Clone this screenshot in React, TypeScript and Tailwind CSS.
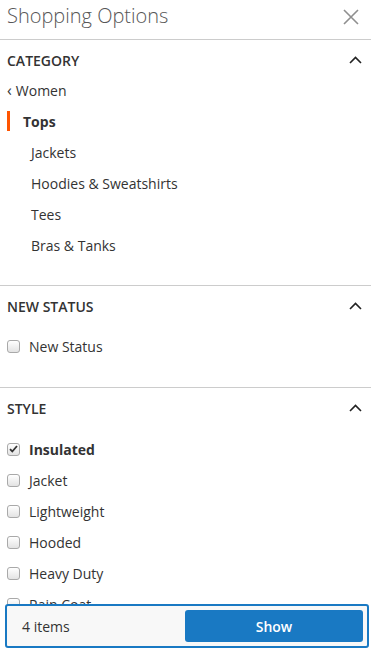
import React from 'react';

const FONT = { fontFamily: '"Open Sans", "Liberation Sans", sans-serif' };

const SUBCATS = ['Jackets', 'Hoodies & Sweatshirts', 'Tees', 'Bras & Tanks'];

const STYLES = [
  { label: 'Insulated', checked: true },
  { label: 'Jacket' },
  { label: 'Lightweight' },
  { label: 'Hooded' },
  { label: 'Heavy Duty' },
  { label: 'Rain Coat' },
];

function ChevronUp() {
  return (
    <svg width="13" height="8" viewBox="0 0 13 8" fill="none" stroke="#222" strokeWidth={1.6}>
      <path d="M1 7l5.5-5.5L12 7" />
    </svg>
  );
}

function Checkbox({ checked }: { checked?: boolean }) {
  return (
    <span className="w-[13px] h-[13px] rounded-[3px] border border-[#a9a9a9] bg-gradient-to-b from-white to-[#e3e3e3] flex items-center justify-center shrink-0">
      {checked && (
        <svg width="9" height="8" viewBox="0 0 9 8" fill="none" stroke="#333" strokeWidth={1.8}>
          <path d="M1 4.2l2.3 2.3L8 1" />
        </svg>
      )}
    </span>
  );
}

function SectionHeader({ title }: { title: string }) {
  return (
    <div className="h-[40px] flex items-center justify-between pl-[7px] pr-[9px]">
      <span className="text-[14px] font-semibold text-[#333] uppercase">{title}</span>
      <ChevronUp />
    </div>
  );
}

function CheckRow({ label, checked }: { label: string; checked?: boolean }) {
  return (
    <div className="h-[20px] flex items-center pl-[7px]">
      <Checkbox checked={checked} />
      <span className={`ml-[9px] text-[14px] text-[#333] ${checked ? 'font-bold' : ''}`}>{label}</span>
    </div>
  );
}

export default function App() {
  return (
    <div style={FONT} className="relative w-[371px] h-[656px] overflow-hidden bg-white">
      <div className="h-[40px] flex items-start justify-between pt-[2px] pl-[7px] pr-[12px] border-b border-[#cccccc]">
        <span className="text-[20px] font-light text-[#575757] leading-[27px]">Shopping Options</span>
        <svg className="mt-[7px]" width="16" height="16" viewBox="0 0 16 16" fill="none" stroke="#8f8f8f" strokeWidth={1.6}>
          <path d="M1 1l14 14M15 1L1 15" />
        </svg>
      </div>

      <div className="pb-[30px] border-b border-[#cccccc]">
        <SectionHeader title="Category" />
        <div className="flex flex-col gap-[11px] text-[14px] text-[#333]">
          <div className="h-[20px] flex items-center pl-[7px]">
            <span className="mr-[4px] text-[16px]">‹</span>Women
          </div>
          <div className="h-[20px] flex items-center">
            <span className="w-[3px] h-[20px] bg-[#ff5501] ml-[7px]" />
            <span className="ml-[13px] font-bold">Tops</span>
          </div>
          {SUBCATS.map(s => (
            <div key={s} className="h-[20px] flex items-center pl-[31px]">{s}</div>
          ))}
        </div>
      </div>

      <div className="pb-[31px] border-b border-[#cccccc]">
        <SectionHeader title="New Status" />
        <div className="mt-[10px]">
          <CheckRow label="New Status" />
        </div>
      </div>

      <div>
        <SectionHeader title="Style" />
        <div className="mt-[11px] flex flex-col gap-[11px]">
          {STYLES.map(s => <CheckRow key={s.label} label={s.label} checked={s.checked} />)}
        </div>
      </div>

      <div className="absolute left-[5px] top-[604px] w-[364px] h-[44px] border-2 border-[#1979c3] rounded-[3px] bg-[#f8f8f8] flex items-center justify-between p-[4px]">
        <span className="ml-[11px] text-[14px] text-[#333]">4 items</span>
        <button className="w-[178px] h-[32px] rounded-[3px] bg-[#1979c3] text-white text-[14px] font-semibold">Show</button>
      </div>
    </div>
  );
}
